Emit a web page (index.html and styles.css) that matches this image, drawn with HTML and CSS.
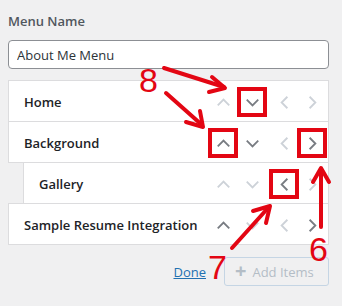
FILE: index.html
```html
<!DOCTYPE html>
<html>
<head>
	<title>Menu structure</title>
	<meta charset="UTF-8">
	<meta name="viewport" content="width=device-width, initial-scale=1.0">
	<link rel="stylesheet" href="styles.css">
</head>
<body>
	<div class="panel">
		<label class="field-label" for="menu-name">Menu Name</label>
		<input class="field-input" id="menu-name" type="text" value="About Me Menu">

		<ul class="menu">
			<li class="menu-item">
				<span class="item-title">Home</span>
				<div class="moves">
					<span class="move up off"><svg viewBox="0 0 24 24"><polyline points="6,15 12,9 18,15"/></svg></span>
					<span class="move down marked"><svg viewBox="0 0 24 24"><polyline points="6,9 12,15 18,9"/></svg></span>
					<span class="move left off"><svg viewBox="0 0 24 24"><polyline points="15,6 9,12 15,18"/></svg></span>
					<span class="move right off"><svg viewBox="0 0 24 24"><polyline points="9,6 15,12 9,18"/></svg></span>
				</div>
			</li>
			<li class="menu-item">
				<span class="item-title">Background</span>
				<div class="moves">
					<span class="move up marked"><svg viewBox="0 0 24 24"><polyline points="6,15 12,9 18,15"/></svg></span>
					<span class="move down"><svg viewBox="0 0 24 24"><polyline points="6,9 12,15 18,9"/></svg></span>
					<span class="move left off"><svg viewBox="0 0 24 24"><polyline points="15,6 9,12 15,18"/></svg></span>
					<span class="move right marked"><svg viewBox="0 0 24 24"><polyline points="9,6 15,12 9,18"/></svg></span>
				</div>
			</li>
			<li class="menu-item sub">
				<span class="item-title">Gallery</span>
				<div class="moves">
					<span class="move up off"><svg viewBox="0 0 24 24"><polyline points="6,15 12,9 18,15"/></svg></span>
					<span class="move down off"><svg viewBox="0 0 24 24"><polyline points="6,9 12,15 18,9"/></svg></span>
					<span class="move left marked"><svg viewBox="0 0 24 24"><polyline points="15,6 9,12 15,18"/></svg></span>
					<span class="move right off"><svg viewBox="0 0 24 24"><polyline points="9,6 15,12 9,18"/></svg></span>
				</div>
			</li>
			<li class="menu-item">
				<span class="item-title">Sample Resume Integration</span>
				<div class="moves">
					<span class="move up"><svg viewBox="0 0 24 24"><polyline points="6,15 12,9 18,15"/></svg></span>
					<span class="move down off"><svg viewBox="0 0 24 24"><polyline points="6,9 12,15 18,9"/></svg></span>
					<span class="move left off"><svg viewBox="0 0 24 24"><polyline points="15,6 9,12 15,18"/></svg></span>
					<span class="move right"><svg viewBox="0 0 24 24"><polyline points="9,6 15,12 9,18"/></svg></span>
				</div>
			</li>
		</ul>

		<div class="actions">
			<a class="done" href="#">Done</a>
			<button class="add-items" disabled><span class="plus">+</span> Add Items</button>
		</div>
	</div>
	<div class="side-strip"></div>

	<!-- annotation layer drawn over the screenshot -->
	<svg class="notes" viewBox="0 0 342 306" width="342" height="306">
		<g class="note-lines">
			<line x1="164" y1="68" x2="224" y2="87"/>
			<polyline points="212,77 225,88 209,92"/>
			<line x1="166" y1="93" x2="202" y2="125"/>
			<polyline points="186,122 203,127 200,111"/>
			<line x1="232" y1="248" x2="268" y2="208"/>
			<polyline points="253,211 270,206 266,223"/>
			<line x1="321" y1="227" x2="321" y2="170"/>
			<polyline points="313,182 321,168 329,182"/>
		</g>
		<text class="note-num" x="139" y="92">8</text>
		<text class="note-num" x="208" y="279">7</text>
		<text class="note-num" x="309" y="261">6</text>
	</svg>
</body>
</html>
```

FILE: styles.css
```css
body {
	margin: 0;
	padding: 0;
	width: 342px;
	height: 306px;
	overflow: hidden;
	background-color: #f0f0f1;
	font-family: "Open Sans", "Noto Sans", sans-serif;
	color: #1d2327;
	display: flex;
	position: relative;
}
.panel {
	width: 321px;
	padding: 11px 8px 0 8px;
	flex-shrink: 0;
}
.side-strip {
	flex-grow: 1;
	margin-left: 8px;
	border-left: 1px solid #dcdcde;
	background-color: #e8e8e9;
}
.field-label {
	display: block;
	font-size: 13px;
	font-weight: 600;
	color: #50575e;
	line-height: 20px;
}
.field-input {
	display: block;
	box-sizing: border-box;
	width: 100%;
	height: 29px;
	margin-top: 9px;
	padding: 0 8px;
	border: 1px solid #8c8f94;
	border-radius: 4px;
	background: #fff;
	font-family: inherit;
	font-size: 13px;
	color: #2c3338;
}
.menu {
	list-style: none;
	margin: 11px 0 0 0;
	padding: 0;
}
.menu-item {
	box-sizing: border-box;
	height: 42px;
	margin-top: -1px;
	display: flex;
	align-items: center;
	padding: 2px 0 0 15px;
	background: #fff;
	border: 1px solid #dcdcde;
}
.menu-item:first-child {
	margin-top: 0;
}
.menu-item.sub {
	margin-left: 15px;
}
.item-title {
	flex-grow: 1;
	font-size: 13px;
	font-weight: 600;
}
.moves {
	display: flex;
	align-items: center;
	padding-right: 4px;
}
.move {
	width: 24px;
	height: 24px;
	display: flex;
	align-items: center;
	justify-content: center;
}
.move.down {
	margin-left: 5px;
}
.move.left {
	margin-left: 8px;
}
.move.right {
	margin-left: 4px;
}
.move svg {
	width: 23px;
	height: 23px;
	fill: none;
	stroke: #787c82;
	stroke-width: 1.9;
}
.move.off svg {
	stroke: #cdd2d8;
}
.move.marked {
	outline: 4px solid #e30613;
	outline-offset: -1px;
}
.actions {
	display: flex;
	align-items: center;
	justify-content: flex-end;
	margin-top: 12px;
}
.done {
	font-size: 13px;
	color: #2271b1;
	text-decoration: underline;
	margin-right: 18px;
}
.add-items {
	box-sizing: border-box;
	width: 105px;
	height: 29px;
	padding: 0 10px;
	border: 1px solid #c5d5e4;
	border-radius: 3px;
	background: #f0f0f1;
	font-family: inherit;
	font-size: 13px;
	color: #b4bdc6;
	display: flex;
	align-items: center;
	gap: 6px;
}
.add-items .plus {
	font-size: 20px;
	font-weight: 700;
	line-height: 1;
	margin-top: -2px;
}
.notes {
	position: absolute;
	left: 0;
	top: 0;
	pointer-events: none;
}
.note-lines line,
.note-lines polyline {
	fill: none;
	stroke: #e30613;
	stroke-width: 4;
	stroke-linecap: round;
	stroke-linejoin: round;
}
.note-num {
	font-family: "Liberation Sans", Arial, sans-serif;
	font-size: 34px;
	fill: #e30613;
}
```
